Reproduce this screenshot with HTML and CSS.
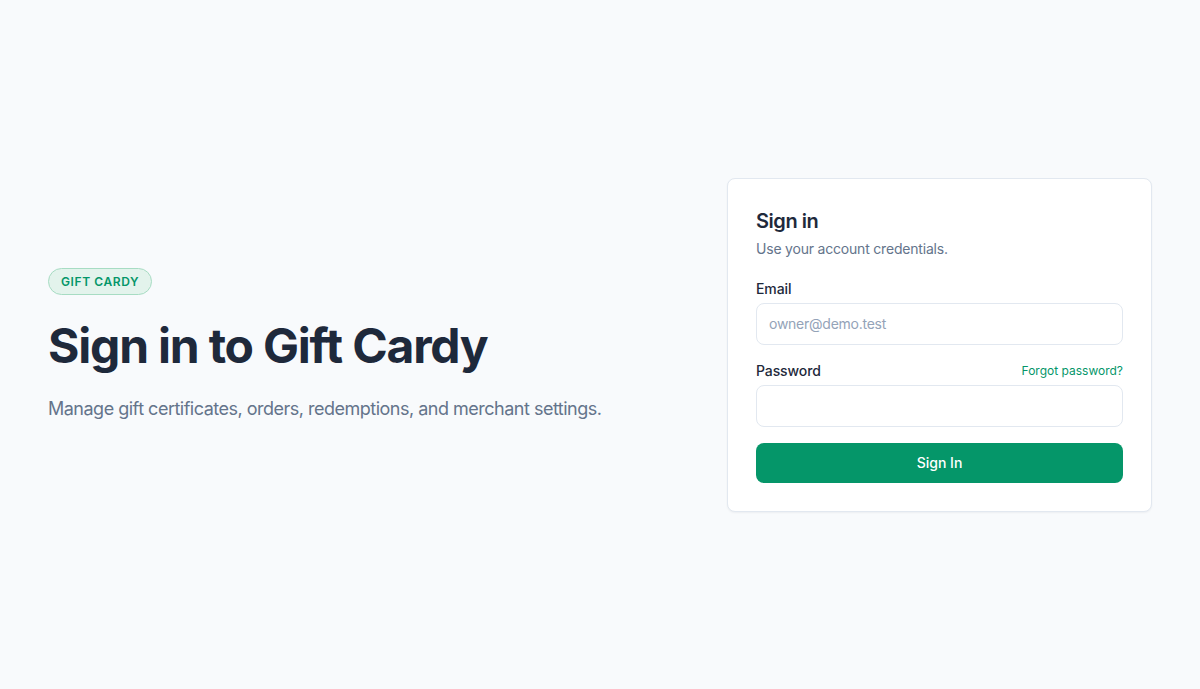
FILE: index.html
```html
<!DOCTYPE html>
<html lang="en">
<head>
<meta charset="utf-8">
<title>Sign in to Gift Cardy</title>
<link rel="stylesheet" href="styles.css">
</head>
<body>
<main class="page">
  <section class="intro">
    <span class="badge">GIFT CARDY</span>
    <h1 class="headline">Sign in to Gift Cardy</h1>
    <p class="lead">Manage gift certificates, orders, redemptions, and merchant settings.</p>
  </section>
  <section class="card">
    <h2 class="card-title">Sign in</h2>
    <p class="card-sub">Use your account credentials.</p>
    <form class="form">
      <div class="field">
        <label class="label" for="email">Email</label>
        <input class="input" id="email" type="email" placeholder="owner@demo.test">
      </div>
      <div class="field">
        <div class="label-row">
          <label class="label" for="password">Password</label>
          <a class="forgot" href="#">Forgot password?</a>
        </div>
        <input class="input" id="password" type="password">
      </div>
      <button class="button" type="button">Sign In</button>
    </form>
  </section>
</main>
</body>
</html>
```

FILE: styles.css
```css
* { box-sizing: border-box; }
html, body { margin: 0; padding: 0; }
body {
  background: #f8fafc;
  font-family: Inter, "Noto Sans", "Liberation Sans", sans-serif;
  color: #1e293b;
}
.page {
  min-height: 689px;
  padding: 0 48px;
  display: grid;
  grid-template-columns: 1fr 425px;
  align-items: center;
  column-gap: 48px;
}
.intro {
  display: flex;
  flex-direction: column;
  align-items: flex-start;
  padding-top: 1px;
}
.badge {
  display: inline-block;
  padding: 4px 12px;
  border: 1px solid #a7dcc3;
  background: #e3f3ec;
  color: #059669;
  border-radius: 999px;
  font-size: 12px;
  line-height: 17px;
  font-weight: 600;
  letter-spacing: 0.6px;
}
.headline {
  margin: 25px 0 0;
  font-size: 48px;
  line-height: 52px;
  font-weight: 700;
  letter-spacing: -1.2px;
  color: #1e293b;
}
.lead {
  margin: 23px 0 0;
  font-size: 18px;
  line-height: 28px;
  letter-spacing: -0.5px;
  color: #64748b;
}
.card {
  background: #ffffff;
  border: 1px solid #e2e8f0;
  border-radius: 8px;
  padding: 28px;
  box-shadow: 0 1px 2px rgba(15, 23, 42, 0.05);
}
.card-title {
  margin: 0;
  font-size: 20px;
  line-height: 28px;
  font-weight: 600;
  letter-spacing: -0.45px;
  color: #1e293b;
}
.card-sub {
  margin: 4px 0 0;
  font-size: 14px;
  line-height: 20px;
  letter-spacing: -0.2px;
  color: #64748b;
}
.form { margin-top: 20px; display: flex; flex-direction: column; gap: 16px; }
.field { display: flex; flex-direction: column; gap: 4px; }
.label-row { display: flex; justify-content: space-between; align-items: center; }
.label {
  font-size: 14px;
  line-height: 20px;
  font-weight: 500;
  letter-spacing: -0.1px;
  color: #1e293b;
}
.forgot {
  font-size: 12px;
  line-height: 16px;
  color: #059669;
  text-decoration: none;
}
.input {
  height: 42px;
  width: 100%;
  border: 1px solid #e2e8f0;
  border-radius: 8px;
  padding: 0 12px;
  font-family: inherit;
  font-size: 14px;
  letter-spacing: -0.25px;
  color: #1e293b;
  background: #ffffff;
  outline: none;
}
.input::placeholder { color: #94a3b8; }
.button {
  height: 40px;
  width: 100%;
  border: none;
  border-radius: 8px;
  background: #059669;
  color: #ffffff;
  font-family: inherit;
  font-size: 14px;
  font-weight: 500;
  cursor: pointer;
}
```
